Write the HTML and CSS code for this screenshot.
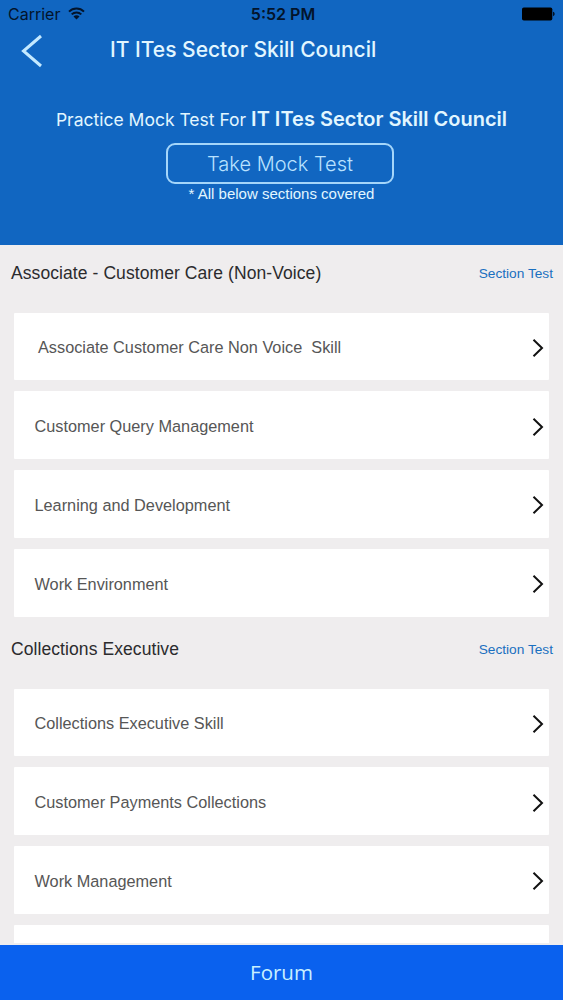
FILE: index.html
```html
<!DOCTYPE html>
<html lang="en">
<head>
    <meta charset="UTF-8">
    <meta name="viewport" content="width=device-width, initial-scale=1.0">
    <title>IT ITes Sector Skill Council</title>
    <link rel="stylesheet" href="styles.css">
</head>
<body>
    <header>
        <div class="status-bar">
            <div class="carrier">
                <span>Carrier</span>
                <svg class="wifi" width="17" height="13" viewBox="0 0 17 13" fill="none" stroke="#03142b" stroke-width="2">
                    <path d="M1 4.6a10.6 10.6 0 0 1 15 0"/>
                    <path d="M3.7 7.4a6.8 6.8 0 0 1 9.6 0"/>
                    <path d="M8.5 12.6l-3-3.200a4.200 4.200 0 0 1 6 0z" fill="#03142b" stroke="none"/>
                </svg>
            </div>
            <span class="time">5:52 PM</span>
            <svg class="battery" width="33" height="14" viewBox="0 0 33 14" fill="#000">
                <rect x="0" y="0.5" width="30.3" height="13" rx="1.8"/>
                <path d="M31.2 4.8c1.8.5 1.8 3.9 0 4.4z"/>
            </svg>
        </div>
        <div class="nav-bar">
            <a href="#" class="back">
                <svg width="22" height="34" viewBox="0 0 22 34" fill="none" stroke="#c4e9ff" stroke-width="3">
                    <path d="M20 2L2.500 17l17.500 15"/>
                </svg>
            </a>
            <h1>IT ITes Sector Skill Council</h1>
        </div>
        <div class="mock-test">
            <p class="practice"><span>Practice Mock Test For</span> <b>IT ITes Sector Skill Council</b></p>
            <button class="take-test">Take Mock Test</button>
            <p class="note">* All below sections covered</p>
        </div>
    </header>
    <main>
        <section>
            <div class="section-head">
                <h2>Associate - Customer Care (Non-Voice)</h2>
                <a href="#">Section Test</a>
            </div>
            <ul class="topics">
                <li class="indent"><span>Associate Customer Care Non Voice&nbsp; Skill</span><svg class="arrow" viewBox="0 0 12 20"><path d="M1.500 1.700L10 10l-8.500 8.300"/></svg></li>
                <li><span>Customer Query Management</span><svg class="arrow" viewBox="0 0 12 20"><path d="M1.500 1.700L10 10l-8.500 8.300"/></svg></li>
                <li><span>Learning and Development</span><svg class="arrow" viewBox="0 0 12 20"><path d="M1.500 1.700L10 10l-8.500 8.300"/></svg></li>
                <li><span>Work Environment</span><svg class="arrow" viewBox="0 0 12 20"><path d="M1.500 1.700L10 10l-8.500 8.300"/></svg></li>
            </ul>
        </section>
        <section>
            <div class="section-head">
                <h2>Collections Executive</h2>
                <a href="#">Section Test</a>
            </div>
            <ul class="topics">
                <li><span>Collections Executive Skill</span><svg class="arrow" viewBox="0 0 12 20"><path d="M1.500 1.700L10 10l-8.500 8.300"/></svg></li>
                <li><span>Customer Payments Collections</span><svg class="arrow" viewBox="0 0 12 20"><path d="M1.500 1.700L10 10l-8.500 8.300"/></svg></li>
                <li><span>Work Management</span><svg class="arrow" viewBox="0 0 12 20"><path d="M1.500 1.700L10 10l-8.500 8.300"/></svg></li>
                <li></li>
            </ul>
        </section>
    </main>
    <footer>Forum</footer>
</body>
</html>
```
FILE: styles.css
```css
* {
    box-sizing: border-box;
}
body {
    font-family: "Liberation Sans", Arial, sans-serif;
    margin: 0;
    height: 1000px;
    display: flex;
    flex-direction: column;
    overflow: hidden;
    background-color: #efedee;
}
h1, h2, p, ul {
    margin: 0;
    padding: 0;
    font-weight: normal;
}
a {
    text-decoration: none;
}
header {
    height: 245px;
    flex-shrink: 0;
    background-color: #1166c1;
    color: #e2f6ff;
    font-family: Inter, sans-serif;
}
.status-bar {
    display: grid;
    grid-template-columns: 1fr auto 1fr;
    align-items: center;
    height: 26px;
    padding: 2px 8px 0 8px;
    color: #03142b;
    font-size: 16px;
}
.carrier {
    display: flex;
    align-items: center;
    gap: 8px;
}
.wifi {
    margin-bottom: 2px;
}
.time {
    margin-left: 3px;
    font-weight: 600;
}
.battery {
    justify-self: end;
    margin-bottom: 1px;
}
.nav-bar {
    display: flex;
    align-items: center;
    height: 43px;
    padding: 5px 21px 0;
}
.back {
    display: flex;
    margin-top: 1px;
}
h1 {
    margin: -2px 0 0 67px;
    font-size: 21px;
    font-weight: 500;
}
.mock-test {
    display: flex;
    flex-direction: column;
    align-items: center;
    padding-top: 37px;
    white-space: nowrap;
}
.practice {
    height: 37px;
    font-size: 17.500px;
    line-height: 27px;
}
.practice b {
    font-size: 20px;
    font-weight: 600;
}
.take-test {
    width: 228px;
    height: 41px;
    margin-right: 3px;
    padding: 0;
    border: 2px solid #a5d6fa;
    border-radius: 9px;
    background: none;
    color: #b9e2ff;
    font-family: Inter, sans-serif;
    font-size: 20px;
    font-weight: 300;
}
.note {
    font-family: "Liberation Sans", Arial, sans-serif;
    font-size: 15px;
    line-height: 19px;
}
main {
    height: 698px;
    overflow: hidden;
}
section {
    padding-bottom: 4.400px;
}
.section-head {
    display: flex;
    justify-content: space-between;
    align-items: center;
    height: 67.600px;
    padding: 0 10px 11px 11px;
}
h2 {
    font-size: 17.500px;
    letter-spacing: 0.080px;
    color: #2b2b2d;
}
.section-head a {
    font-size: 13.700px;
    color: #1a70c0;
}
.topics {
    display: flex;
    flex-direction: column;
    gap: 11.200px;
    margin: 0 14.500px 0 14px;
    list-style: none;
}
.topics li {
    display: flex;
    justify-content: space-between;
    align-items: center;
    height: 67.600px;
    padding: 3px 5px 0 20.500px;
    border-radius: 1px;
    background-color: #fff;
    color: #565656;
    font-size: 16.300px;
}
.topics .indent {
    padding-left: 24px;
}
.arrow {
    width: 12px;
    height: 20px;
    fill: none;
    stroke: #111;
    stroke-width: 2;
}
footer {
    height: 55px;
    margin-top: auto;
    background-color: #0a61ee;
    color: #c8f0ff;
    font-family: "Open Sans", "Noto Sans", sans-serif;
    font-size: 20.500px;
    line-height: 55px;
    text-align: center;
}
```
